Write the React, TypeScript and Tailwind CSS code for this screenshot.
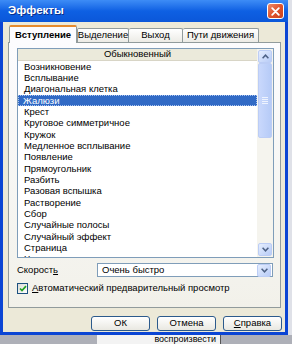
import React from "react";

const items = [
  "Возникновение",
  "Всплывание",
  "Диагональная клетка",
  "Жалюзи",
  "Крест",
  "Круговое симметричное",
  "Кружок",
  "Медленное всплывание",
  "Появление",
  "Прямоугольник",
  "Разбить",
  "Разовая вспышка",
  "Растворение",
  "Сбор",
  "Случайные полосы",
  "Случайный эффект",
  "Страница",
  "Часовая стрелка",
];

function Chevron({ up }: { up?: boolean }) {
  return (
    <svg width="7" height="5" viewBox="0 0 7 5">
      <path
        d={up ? "M0.6 4.2 L3.5 1.2 L6.4 4.2" : "M0.6 0.8 L3.5 3.8 L6.4 0.8"}
        fill="none"
        stroke="#4d6185"
        strokeWidth="1.5"
      />
    </svg>
  );
}

function ScrollBtn({ up }: { up?: boolean }) {
  return (
    <div className="w-[14px] h-[13px] rounded-[2px] border border-[#bccdf5] bg-gradient-to-br from-[#e6eefe] to-[#b8ccf7] flex items-center justify-center">
      <Chevron up={up} />
    </div>
  );
}

function XpButton({ children }: { children: React.ReactNode }) {
  return (
    <div className="w-[59px] h-[15px] rounded-[3px] border border-[#2c5a8c] bg-gradient-to-b from-[#ffffff] to-[#e9e8e1] flex items-center justify-center text-[9.5px] text-black">
      {children}
    </div>
  );
}

export default function App() {
  return (
    <div className="w-[292px] h-[344px] overflow-hidden flex flex-col bg-[#aeb0b8] font-['Liberation_Sans',Arial,sans-serif]">
      <div className="flex h-[338px]">
        <div className="w-[288px] flex flex-col">
          {/* title bar */}
          <div className="h-[22px] flex items-center justify-between pl-[8px] pr-[4px] bg-gradient-to-b from-[#3d8cf6] via-[#0e60e3] to-[#0b57d9]">
            <span className="text-white font-bold text-[11.5px] [text-shadow:1px_1px_0_#0b2f8a]">
              Эффекты
            </span>
            <div className="w-[17px] h-[16px] rounded-[3px] border border-white bg-gradient-to-br from-[#ec8a6a] via-[#e0532c] to-[#c8431f] flex items-center justify-center">
              <svg width="9" height="9" viewBox="0 0 9 9">
                <path d="M1.2 1.2 L7.8 7.8 M7.8 1.2 L1.2 7.8" stroke="#fff" strokeWidth="1.8" strokeLinecap="round" />
              </svg>
            </div>
          </div>
          {/* frame */}
          <div className="flex-1 flex bg-[#0b45d4]">
            <div className="flex-1 ml-[3px] mr-[3px] mb-[3px] bg-[#ece9d8] flex flex-col">
              {/* tabs */}
              <div className="mt-[3px] pl-[6px] h-[17px] flex items-end">
                <div className="relative z-10 -mb-[1px] w-[68px] h-[18px] border border-b-0 border-[#919b9c] border-t-[#e68b2c] border-t-2 rounded-t-[2px] bg-[#fcfcfe] flex items-center justify-center text-[9.5px] font-bold text-black">
                  Вступление
                </div>
                <div className="w-[52px] h-[14px] border border-b-0 border-[#919b9c] rounded-t-[2px] bg-gradient-to-b from-[#ffffff] to-[#ecebe6] flex items-center justify-center text-[9.5px] text-black">
                  Выделение
                </div>
                <div className="w-[54px] h-[14px] border border-b-0 border-l-0 border-[#919b9c] rounded-t-[2px] bg-gradient-to-b from-[#ffffff] to-[#ecebe6] flex items-center justify-center text-[9.5px] text-black">
                  Выход
                </div>
                <div className="w-[76px] h-[14px] border border-b-0 border-l-0 border-[#919b9c] rounded-t-[2px] bg-gradient-to-b from-[#ffffff] to-[#ecebe6] flex items-center justify-center text-[9.5px] text-black">
                  Пути движения
                </div>
              </div>
              {/* panel */}
              <div className="ml-[5px] w-[273px] h-[266px] border border-[#919b9c] bg-gradient-to-b from-[#fcfcfe] to-[#f2f1ea] flex flex-col">
                {/* listbox */}
                <div className="ml-[8px] mt-[5px] w-[257px] h-[210px] border border-[#7f9db9] bg-white flex">
                  <div className="flex-1 flex flex-col overflow-hidden">
                    <div className="h-[12px] shrink-0 bg-[#ebeadb] border-b border-[#d8d5c6] flex items-center justify-center text-[9.5px] text-black">
                      Обыкновенный
                    </div>
                    <div className="flex flex-col">
                      {items.map((t) => {
                        const sel = t === "Жалюзи";
                        return (
                          <div
                            key={t}
                            className={
                              sel
                                ? "h-[11.35px] shrink-0 pl-[5px] flex items-center text-[9.5px] text-white bg-[#316ac5] outline outline-1 outline-dotted outline-[#a9c3f0] -outline-offset-1"
                                : "h-[11.35px] shrink-0 pl-[6px] flex items-center text-[9.5px] text-black"
                            }
                          >
                            {t}
                          </div>
                        );
                      })}
                    </div>
                  </div>
                  {/* scrollbar */}
                  <div className="w-[16px] flex flex-col items-center bg-[#f5f4ee] py-[1px]">
                    <ScrollBtn up />
                    <div className="flex-1 w-[14px] flex flex-col">
                      <div className="h-[75px] rounded-[2px] border border-[#bccdf5] bg-gradient-to-r from-[#c9d8fc] to-[#b6cbf7] flex flex-col items-center justify-center gap-[1px]">
                        <div className="w-[6px] h-[1px] bg-[#eef3fe]" />
                        <div className="w-[6px] h-[1px] bg-[#eef3fe]" />
                        <div className="w-[6px] h-[1px] bg-[#eef3fe]" />
                        <div className="w-[6px] h-[1px] bg-[#eef3fe]" />
                      </div>
                    </div>
                    <ScrollBtn />
                  </div>
                </div>
                {/* speed */}
                <div className="mt-[5px] ml-[8px] h-[14px] flex items-center">
                  <div className="w-[80px] text-[9.5px] text-black">
                    Скорост<span className="underline">ь</span>
                  </div>
                  <div className="w-[176px] h-[14px] border border-[#7f9db9] bg-white flex items-center justify-between pl-[4px] pr-[1px]">
                    <span className="text-[9.5px] text-black">Очень быстро</span>
                    <ScrollBtn />
                  </div>
                </div>
                {/* checkbox */}
                <div className="mt-[6px] ml-[8px] h-[11px] flex items-center gap-[4px]">
                  <div className="w-[11px] h-[11px] border border-[#1c5180] bg-gradient-to-br from-[#dcdcd7] to-[#ffffff] flex items-center justify-center">
                    <svg width="8" height="7" viewBox="0 0 8 7">
                      <path d="M1 3.5 L3 5.5 L7 1.2" fill="none" stroke="#21a121" strokeWidth="1.7" />
                    </svg>
                  </div>
                  <span className="text-[9.5px] text-black">
                    <span className="underline">А</span>втоматический предварительный просмотр
                  </span>
                </div>
              </div>
              {/* buttons */}
              <div className="mt-[8px] flex justify-end gap-[7px] pr-[3px]">
                <XpButton>ОК</XpButton>
                <XpButton>Отмена</XpButton>
                <XpButton>
                  <span className="underline">С</span>правка
                </XpButton>
              </div>
            </div>
          </div>
        </div>
        <div className="flex-1 bg-[#dfe1e8]" />
      </div>
      {/* backdrop */}
      <div className="flex-1 flex">
        <div className="ml-[97px] w-[124px] bg-[#f3f3f3] border-r border-[#555] flex items-center justify-end pr-[4px] text-[9px] text-black leading-none">
          воспроизвести
        </div>
      </div>
    </div>
  );
}
